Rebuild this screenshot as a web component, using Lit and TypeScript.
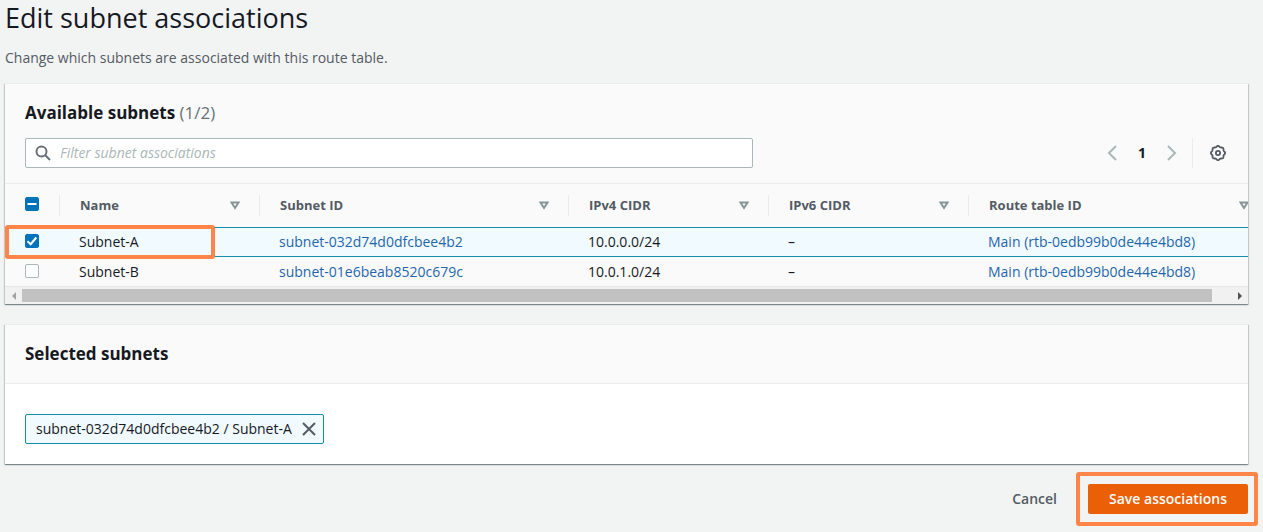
import { LitElement, html, css, svg } from "lit";
import { customElement, state } from "lit/decorators.js";
import { classMap } from "lit/directives/class-map.js";

interface Subnet {
  name: string;
  id: string;
  ipv4: string;
  ipv6: string;
  routeTable: string;
}

const SUBNETS: Subnet[] = [
  { name: "Subnet-A", id: "subnet-032d74d0dfcbee4b2", ipv4: "10.0.0.0/24", ipv6: "–", routeTable: "Main (rtb-0edb99b0de44e4bd8)" },
  { name: "Subnet-B", id: "subnet-01e6beab8520c679c", ipv4: "10.0.1.0/24", ipv6: "–", routeTable: "Main (rtb-0edb99b0de44e4bd8)" },
];

const COLUMNS = [
  { label: "Name", cls: "col-std" },
  { label: "Subnet ID", cls: "col-id" },
  { label: "IPv4 CIDR", cls: "col-std" },
  { label: "IPv6 CIDR", cls: "col-std" },
  { label: "Route table ID", cls: "col-route" },
];

const stroke = (d: string, size = 16) => html`<svg class="icon" width=${size} height=${size} viewBox="0 0 16 16" aria-hidden="true">
  ${svg`<path d=${d} fill="none" stroke="currentColor" stroke-width="2"/>`}</svg>`;

const gearPath = (() => {
  const points: string[] = [];
  for (let i = 0; i <= 96; i++) {
    const a = (i / 96) * Math.PI * 2;
    const r = 6.6 + 0.5 * Math.cos(8 * a);
    points.push(`${(8 + r * Math.cos(a)).toFixed(2)} ${(8 + r * Math.sin(a)).toFixed(2)}`);
  }
  return `M${points.join("L")}Z`;
})();

@customElement("app-root")
export class AppRoot extends LitElement {
  @state() private selected = new Set<string>([SUBNETS[0].id]);

  static styles = css`
    :host {
      display: block;
      box-sizing: border-box;
      min-height: 100vh;
      padding: 0 15px 6px 5px;
      background: #f2f3f3;
      color: #16191f;
      font: 14px/20px "Open Sans", "Noto Sans", sans-serif;
    }
    * { box-sizing: border-box; }
    h1, h2, p { margin: 0; }
    button, input { font: inherit; color: inherit; }
    button { border: 0; padding: 0; background: none; cursor: pointer; }
    a { color: #1f66ad; text-decoration: none; }
    .icon { display: block; }
    h1 { font-size: 27px; line-height: 36px; font-weight: 400; }
    .lead { margin-top: 12px; color: #545b64; }
    .card {
      margin-top: 15px;
      border-top: 1px solid #eaeded;
      background: #fff;
      box-shadow: 0 1px 1px rgba(0, 28, 36, 0.3), 1px 1px 1px rgba(0, 28, 36, 0.15), -1px 1px 1px rgba(0, 28, 36, 0.15);
    }
    .card + .card { margin-top: 20px; }
    .head { padding: 17px 20px 15px; background: #fafafa; border-bottom: 1px solid #eaeded; }
    .head-plain { padding-bottom: 17px; }
    h2 { font-size: 17px; line-height: 24px; font-weight: 700; }
    .count { font-weight: 400; color: #687078; }
    .tools { display: flex; align-items: center; justify-content: space-between; margin-top: 13px; }
    .search {
      display: flex; align-items: center; gap: 9px;
      flex: 0 1 728px; height: 30px; padding: 0 9px;
      border: 1px solid #aab7b8; border-radius: 2px;
      background: #fff; color: #687078;
    }
    .search input { flex: 1; min-width: 0; border: 0; padding: 0; outline: 0; background: none; color: #16191f; }
    .search input::placeholder { color: #aab7b8; font-style: italic; opacity: 1; }
    .pager { display: flex; align-items: center; height: 30px; color: #aab7b8; }
    .page { width: 44px; text-align: center; font-weight: 700; color: #16191f; }
    .prefs { display: flex; align-items: center; height: 30px; margin-left: 12px; padding: 0 2px 0 17px; border-left: 1px solid #eaeded; color: #545b64; }
    .viewport { overflow: hidden; background: #fafafa; }
    table { width: 1264px; border-collapse: separate; border-spacing: 0; table-layout: fixed; }
    .col-check { width: 55px; }
    .col-std { width: 200px; }
    .col-id { width: 309px; }
    .col-route { width: 300px; }
    th { height: 43px; padding: 0 0 1px; text-align: left; font-size: 13px; font-weight: 700; color: #545b64; }
    .cell { display: flex; align-items: center; justify-content: space-between; height: 21px; padding: 0 19px 0 20px; border-right: 1px solid #eaeded; }
    .sort { display: block; color: #879596; }
    td { height: 29px; padding: 0 19px; white-space: nowrap; }
    td.check { position: relative; padding-left: 20px; }
    .picked td { height: 30px; background: #f1faff; border-top: 1px solid #128fab; border-bottom: 1px solid #128fab; }
    .tick {
      appearance: none; display: block; width: 14px; height: 14px; margin: 0 0 2px;
      border: 1px solid #aab7b8; border-radius: 2px; background: #fff center / 14px 14px no-repeat; background-origin: border-box;
    }
    .tick:checked {
      border-color: #0073bb; background-color: #0073bb;
      background-image: url("data:image/svg+xml,%3Csvg xmlns='http://www.w3.org/2000/svg' viewBox='0 0 14 14'%3E%3Cpath d='M2.5 7.2L5.7 10.2L11.3 3.5' fill='none' stroke='white' stroke-width='2'/%3E%3C/svg%3E");
    }
    .tick:indeterminate {
      border-color: #0073bb; background-color: #0073bb;
      background-image: url("data:image/svg+xml,%3Csvg xmlns='http://www.w3.org/2000/svg' viewBox='0 0 14 14'%3E%3Cpath d='M2.5 7H11.5' stroke='white' stroke-width='2'/%3E%3C/svg%3E");
    }
    .callout { position: absolute; border: 4px solid #ff8548; border-radius: 3px; pointer-events: none; }
    .callout-row { z-index: 1; left: 0; top: -3px; width: 210px; height: 34px; }
    .callout-save { inset: -12px -10px -12px -12px; }
    .scroll { display: flex; align-items: center; height: 18px; background: #f1f1f1; border-top: 1px solid #e6e8e8; }
    .scroll button { display: flex; align-items: center; justify-content: center; width: 17px; height: 17px; color: #a3a3a3; }
    .scroll .next { color: #505050; }
    .track { flex: 1; height: 13px; }
    .thumb { width: 98.4%; height: 13px; background: #c1c1c1; }
    .body { padding: 30px 20px 20px; }
    .token {
      display: inline-flex; align-items: center; gap: 9px; height: 30px; padding: 0 6px 0 10px;
      border: 1px solid #128fab; border-radius: 2px; background: #f1faff; vertical-align: top;
    }
    .token button { color: #545b64; }
    .actions { display: flex; align-items: center; justify-content: flex-end; gap: 31px; margin-top: 20px; }
    .cancel, .save { height: 30px; font-weight: 600; }
    .cancel { color: #545b64; }
    .save { width: 160px; border-radius: 2px; background: #eb5f07; color: #fff; }
    .save-wrap { position: relative; display: flex; }
  `;

  private toggle(id: string) {
    const next = new Set(this.selected);
    next.has(id) ? next.delete(id) : next.add(id);
    this.selected = next;
  }

  private toggleAll() {
    this.selected = this.selected.size === SUBNETS.length ? new Set() : new Set(SUBNETS.map((s) => s.id));
  }

  private renderRow(s: Subnet, i: number) {
    const on = this.selected.has(s.id);
    return html`<tr class=${classMap({ picked: on })}>
      <td class="check">
        <input class="tick" type="checkbox" aria-label="Select ${s.name}" .checked=${on} @change=${() => this.toggle(s.id)} />
        ${i === 0 ? html`<span class="callout callout-row"></span>` : ""}
      </td>
      <td>${s.name}</td>
      <td><a href="#">${s.id}</a></td>
      <td>${s.ipv4}</td>
      <td>${s.ipv6}</td>
      <td><a href="#">${s.routeTable}</a></td>
    </tr>`;
  }

  render() {
    const count = this.selected.size;
    return html`
      <h1>Edit subnet associations</h1>
      <p class="lead">Change which subnets are associated with this route table.</p>

      <section class="card">
        <div class="head">
          <h2>Available subnets <span class="count">(${count}/${SUBNETS.length})</span></h2>
          <div class="tools">
            <label class="search">
              <svg class="icon" width="16" height="16" viewBox="0 0 16 16" fill="none" stroke="currentColor" stroke-width="2" aria-hidden="true">
                <circle cx="6.5" cy="6.5" r="5" /><path d="M10 10L15 15" />
              </svg>
              <input type="text" placeholder="Filter subnet associations" aria-label="Filter subnet associations" />
            </label>
            <div class="pager">
              <button aria-label="Previous page">${stroke("M12 1L5 8L12 15")}</button>
              <span class="page">1</span>
              <button aria-label="Next page">${stroke("M4 1L11 8L4 15")}</button>
              <button class="prefs" aria-label="Preferences">
                <svg class="icon" width="16" height="16" viewBox="0 0 16 16" fill="none" stroke="currentColor" stroke-width="1.8" aria-hidden="true">
                  <path d=${gearPath} /><circle cx="8" cy="8" r="2.1" />
                </svg>
              </button>
            </div>
          </div>
        </div>
        <div class="viewport">
          <table>
            <thead>
              <tr>
                <th class="col-check">
                  <div class="cell">
                    <input class="tick" type="checkbox" aria-label="Select all"
                      .indeterminate=${count > 0 && count < SUBNETS.length}
                      .checked=${count === SUBNETS.length} @change=${this.toggleAll} />
                  </div>
                </th>
                ${COLUMNS.map((c) => html`<th class=${c.cls}>
                  <div class="cell">${c.label}
                    <svg class="sort" width="10" height="9" viewBox="0 0 10 9" aria-hidden="true">
                      <path d="M1.5 1.5H8.5L5 7Z" fill="none" stroke="currentColor" stroke-width="2" />
                    </svg>
                  </div>
                </th>`)}
              </tr>
            </thead>
            <tbody>${SUBNETS.map((s, i) => this.renderRow(s, i))}</tbody>
          </table>
        </div>
        <div class="scroll">
          <button aria-label="Scroll left"><svg width="4" height="8" viewBox="0 0 4 8"><path d="M4 0V8L0 4Z" fill="currentColor" /></svg></button>
          <div class="track"><div class="thumb"></div></div>
          <button class="next" aria-label="Scroll right"><svg width="4" height="8" viewBox="0 0 4 8"><path d="M0 0V8L4 4Z" fill="currentColor" /></svg></button>
        </div>
      </section>

      <section class="card">
        <div class="head head-plain"><h2>Selected subnets</h2></div>
        <div class="body">
          ${SUBNETS.filter((s) => this.selected.has(s.id)).map((s) => html`<span class="token">${s.id} / ${s.name}
            <button aria-label="Remove ${s.name}" @click=${() => this.toggle(s.id)}>${stroke("M2 2L14 14M14 2L2 14")}</button>
          </span>`)}
        </div>
      </section>

      <div class="actions">
        <button class="cancel">Cancel</button>
        <div class="save-wrap">
          <button class="save">Save associations</button>
          <span class="callout callout-save"></span>
        </div>
      </div>
    `;
  }
}
